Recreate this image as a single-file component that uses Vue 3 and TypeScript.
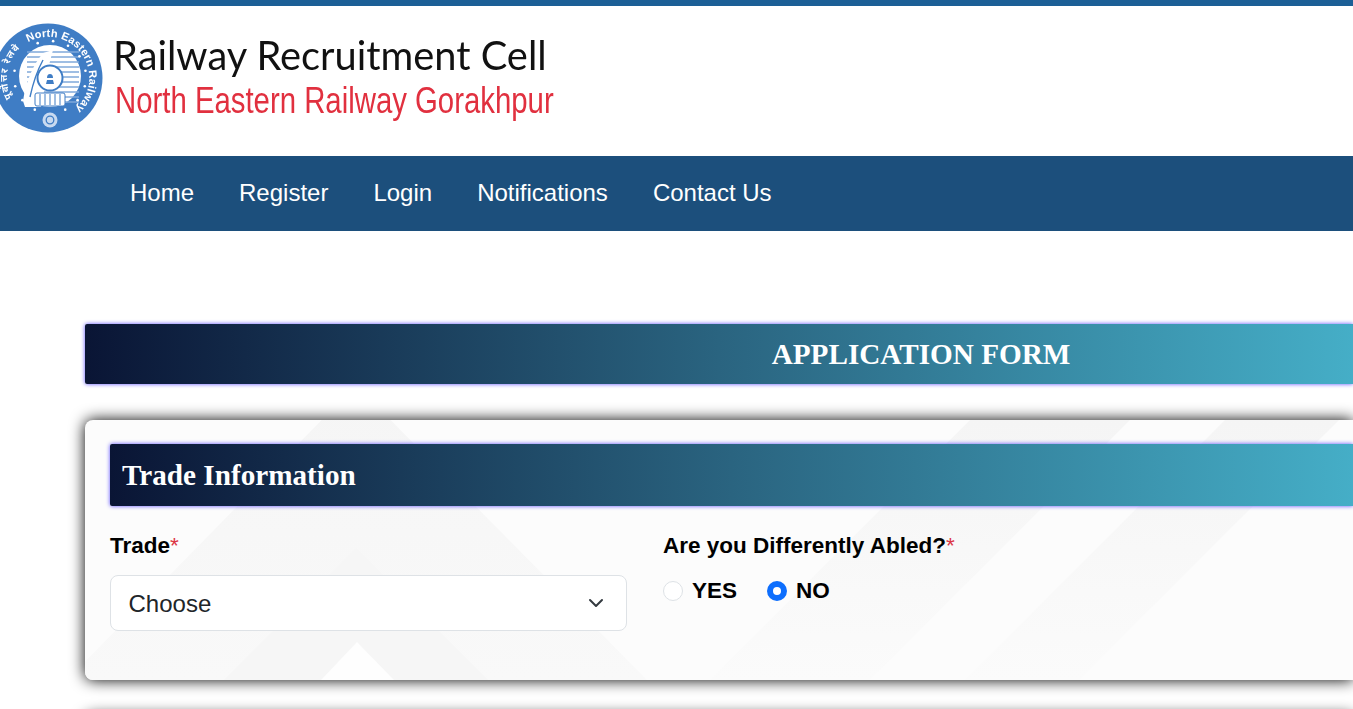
<script setup lang="ts">
const navItems: string[] = ['Home', 'Register', 'Login', 'Notifications', 'Contact Us']
const stripes: number[] = [0, 1, 2, 3, 4, 5, 6, 7, 8, 9, 10]
const dots = [-110, -85, -60, -35, -10, 15, 40, 65, 115, 140, 165, 190].map((deg: number) => ({
  x: 57 + 36 * Math.cos((deg * Math.PI) / 180),
  y: 54 + 36 * Math.sin((deg * Math.PI) / 180),
}))
</script>

<template>
  <div class="page">
    <header class="brand">
      <svg class="emblem" width="110" height="110" viewBox="0 0 110 110" aria-label="North Eastern Railway emblem">
        <defs>
          <path id="arc-en" d="M 35.1 19.1 A 41 41 0 0 1 75.5 90.5" fill="none" />
          <path id="arc-hi" d="M 19.1 74.9 A 41 41 0 0 1 31.5 21.4" fill="none" />
        </defs>
        <circle cx="55" cy="55" r="54.5" fill="#3f7dc5" />
        <text class="emblem-text">
          <textPath href="#arc-en" textLength="120">North Eastern Railway</textPath>
        </text>
        <text class="emblem-text hi">
          <textPath href="#arc-hi" textLength="54">पूर्वोत्तर रेलवे</textPath>
        </text>
        <circle cx="57" cy="53" r="31" fill="#fff" />
        <g stroke="#7fa8da" stroke-width="1.7">
          <line v-for="n in stripes" :key="n" x1="34" :y1="29 + n * 5" x2="86" :y2="29 + n * 5" />
        </g>
        <path d="M30 78 C33 58 40 42 50 30 L60 27 L56 42 L48 84 L32 84 Z" fill="#fff" />
        <path d="M37 74 C40 60 44 48 50 37" fill="none" stroke="#3f7dc5" stroke-width="1.4" />
        <circle cx="57" cy="55" r="12.5" fill="#fff" stroke="#3f7dc5" stroke-width="2" />
        <path d="M53 61 h8 l-1 -4 h-6 Z M54 55 a3 4 0 1 1 6 0 Z" fill="#3f7dc5" />
        <rect x="42" y="70" width="30" height="13" rx="2" fill="#fff" stroke="#3f7dc5" stroke-width="1" />
        <g stroke="#3f7dc5" stroke-width="1">
          <line x1="47" y1="71" x2="47" y2="82" />
          <line x1="52" y1="71" x2="52" y2="82" />
          <line x1="57" y1="71" x2="57" y2="82" />
          <line x1="62" y1="71" x2="62" y2="82" />
          <line x1="67" y1="71" x2="67" y2="82" />
        </g>
        <circle v-for="(d, i) in dots" :key="i" :cx="d.x" :cy="d.y" r="1.3" fill="#fff" />
        <circle cx="57" cy="97" r="7.5" fill="#c9daf0" />
        <circle cx="57" cy="97" r="3.8" fill="none" stroke="#3f7dc5" stroke-width="1.3" />
      </svg>
      <div class="brand-text">
        <div class="brand-title">Railway Recruitment Cell</div>
        <div class="brand-sub">North Eastern Railway Gorakhpur</div>
      </div>
    </header>

    <nav class="nav">
      <a v-for="item in navItems" :key="item" class="nav-link" href="#">{{ item }}</a>
    </nav>

    <main class="content">
      <div class="form-banner">APPLICATION FORM</div>

      <section class="card">
        <svg class="card-pattern" width="1268" height="260" viewBox="0 0 1268 260" aria-hidden="true">
          <defs>
            <linearGradient id="fade" x1="0" y1="0" x2="0" y2="1">
              <stop offset="0" stop-color="#f5f5f5" />
              <stop offset="1" stop-color="#f9f9f9" />
            </linearGradient>
            <linearGradient id="band" x1="0" y1="0" x2="0" y2="1">
              <stop offset="0" stop-color="#f5f5f5" />
              <stop offset="1" stop-color="#fbfbfb" />
            </linearGradient>
          </defs>
          <polygon points="271,-35 -18,260 562,260" fill="url(#fade)" />
          <polygon points="271,128 139,260 403,260" fill="#f6f6f6" />
          <polygon points="272,222 236,260 309,260" fill="#fefefe" />
          <polygon points="885,0 1045,0 785,260 625,260" fill="url(#band)" />
          <polygon points="1140,0 1254,0 994,260 880,260" fill="url(#band)" />
        </svg>

        <h2 class="section-banner">Trade Information</h2>

        <div class="fields">
          <div class="field">
            <label class="label">Trade<span class="req">*</span></label>
            <div class="select-wrap">
              <select class="select">
                <option>Choose</option>
              </select>
              <svg class="chevron" width="16" height="16" viewBox="0 0 16 16" aria-hidden="true">
                <path d="M2 5l6 6 6-6" fill="none" stroke="#343a40" stroke-width="2" stroke-linecap="round" stroke-linejoin="round" />
              </svg>
            </div>
          </div>
          <div class="field">
            <label class="label">Are you Differently Abled?<span class="req">*</span></label>
            <div class="radios">
              <label class="radio"><input type="radio" name="abled" /> YES</label>
              <label class="radio"><input type="radio" name="abled" checked /> NO</label>
            </div>
          </div>
        </div>
      </section>

      <section class="card next-card"></section>
    </main>
  </div>
</template>

<style>
html,
body {
  margin: 0;
  height: 709px;
  overflow: hidden;
  background: #fff;
}
</style>

<style scoped>
.page {
  width: 1353px;
  height: 709px;
  overflow: hidden;
  font-family: "Liberation Sans", Arial, sans-serif;
  border-top: 6px solid #1c5f96;
  box-sizing: border-box;
}
.brand {
  height: 150px;
  display: flex;
  align-items: flex-start;
  background: #fff;
}
.emblem {
  margin: 17px 0 0 -7px;
  flex: none;
  filter: blur(0.4px);
}
.emblem-text {
  font-family: "Liberation Sans", sans-serif;
  font-weight: 700;
  font-size: 11px;
  fill: #fff;
}
.hi {
  font-family: "Noto Sans", sans-serif;
  font-size: 9.5px;
}
.brand-text {
  margin: 26px 0 0 10px;
  filter: blur(0.35px);
}
.brand-title {
  font-family: Lato, sans-serif;
  font-size: 39.8px;
  line-height: 46px;
  color: #111;
  white-space: nowrap;
}
.brand-sub {
  font-size: 36px;
  line-height: 40px;
  color: #e1303f;
  margin-left: 2px;
  margin-top: 3px;
  white-space: nowrap;
  transform: scaleX(0.815);
  transform-origin: left center;
}
.nav {
  height: 75px;
  box-sizing: border-box;
  padding: 0 0 2px 130px;
  background: #1c4f7c;
  display: flex;
  align-items: center;
  gap: 45px;
}
.nav-link {
  color: #fff;
  font-size: 24px;
  text-decoration: none;
}
.content {
  padding: 93px 0 0 85px;
}
.form-banner {
  height: 60px;
  box-sizing: border-box;
  padding-left: 404px;
  display: flex;
  align-items: center;
  justify-content: center;
  font-family: "Liberation Serif", serif;
  font-weight: 700;
  font-size: 29.2px;
  color: #fff;
  border-radius: 2px 0 0 2px;
  background: linear-gradient(to right, #0a1535, #2a6480 50%, #45aec7);
  box-shadow: 0 0 4px #5a4cff;
}
.card {
  position: relative;
  margin-top: 36px;
  height: 260px;
  box-sizing: border-box;
  padding: 24px 0 0 25px;
  background: #fcfcfc;
  border-radius: 8px 0 0 8px;
  box-shadow: 0 0 15px #000;
}
.card-pattern {
  position: absolute;
  left: 0;
  top: 0;
  border-radius: 8px 0 0 8px;
}
.section-banner {
  position: relative;
  margin: 0;
  height: 62px;
  box-sizing: border-box;
  padding-left: 12px;
  display: flex;
  align-items: center;
  font-family: "Liberation Serif", serif;
  font-weight: 700;
  font-size: 29.2px;
  color: #fff;
  border-radius: 2px 0 0 2px;
  background: linear-gradient(to right, #0a1535, #2a6480 50%, #45aec7);
  box-shadow: 0 0 4px #5a4cff;
}
.fields {
  position: relative;
  display: grid;
  grid-template-columns: 517px 517px;
  column-gap: 36px;
  margin-top: 27px;
}
.label {
  display: block;
  font-weight: 700;
  font-size: 22.5px;
  line-height: 26px;
  color: #000;
}
.req {
  color: #dc3545;
  font-weight: 400;
}
.select-wrap {
  position: relative;
  margin-top: 16px;
}
.select {
  display: block;
  width: 517px;
  height: 56px;
  box-sizing: border-box;
  padding: 0 17.5px;
  appearance: none;
  background: #fff;
  border: 1px solid #dee2e6;
  border-radius: 8px;
  font-family: inherit;
  font-size: 24px;
  color: #212529;
}
.chevron {
  position: absolute;
  right: 23px;
  top: 20px;
}
.radios {
  display: flex;
  gap: 30px;
  margin-top: 16px;
}
.radio {
  display: flex;
  align-items: center;
  gap: 9px;
  font-weight: 700;
  font-size: 22.5px;
  line-height: 32px;
  color: #000;
}
.radio input {
  appearance: none;
  margin: 0;
  width: 20px;
  height: 20px;
  box-sizing: border-box;
  border: 1px solid #dee2e6;
  border-radius: 50%;
  background: #fff;
}
.radio input:checked {
  border: 6px solid #0d6efd;
}
.next-card {
  background: #fff;
}
</style>
